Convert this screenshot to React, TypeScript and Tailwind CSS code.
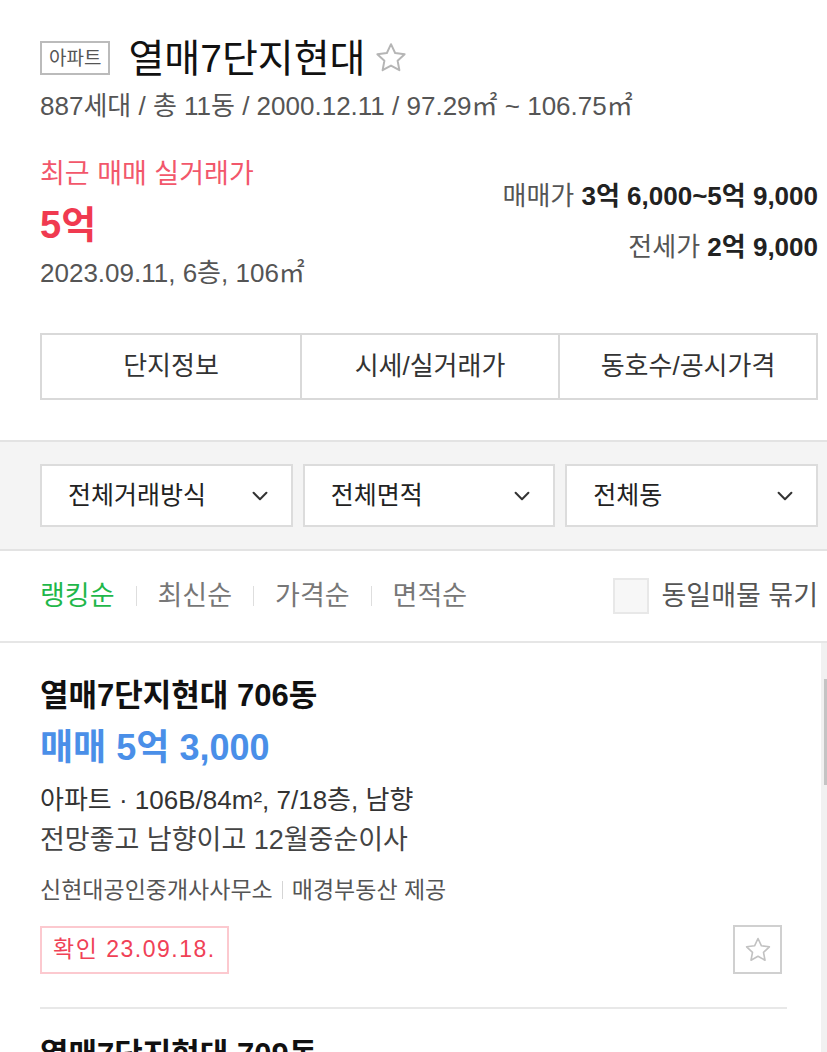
import React from "react";

const font = { fontFamily: '"Liberation Sans", "Noto Sans CJK KR", sans-serif' };

const StarIcon = ({ size = 32, color = "#b5b5b5" }: { size?: number; color?: string }) => (
  <svg width={size} height={size} viewBox="0 0 24 24" fill="none">
    <path
      d="M12 2.8l2.75 5.85 6.35.8-4.7 4.4 1.2 6.3L12 17.05 6.4 20.15l1.2-6.3-4.7-4.4 6.35-.8L12 2.8z"
      stroke={color}
      strokeWidth="1.3"
      strokeLinejoin="round"
    />
  </svg>
);

const Chevron = () => (
  <svg width="22" height="22" viewBox="0 0 24 24" fill="none">
    <path d="M5 8.5l7 7 7-7" stroke="#333" strokeWidth="2.2" strokeLinecap="round" strokeLinejoin="round" />
  </svg>
);

const tabs = ["단지정보", "시세/실거래가", "동호수/공시가격"];
const filters = ["전체거래방식", "전체면적", "전체동"];
const sorts = ["랭킹순", "최신순", "가격순", "면적순"];

export default function App() {
  return (
    <div className="w-[827px] h-[1052px] overflow-hidden bg-white text-[#222]" style={font}>
      {/* header */}
      <div className="pl-[40px] pr-[9px] pt-[34px]">
        <div className="flex items-center h-[48px]">
          <span className="border-2 border-[#bbb] px-[7px] h-[34px] flex items-center text-[19px] text-[#555] leading-none">
            아파트
          </span>
          <h1 className="ml-[18px] text-[39px] leading-none text-[#111]">열매7단지현대</h1>
          <span className="ml-[8px] flex items-center">
            <StarIcon size={36} />
          </span>
        </div>
        <p className="mt-[9px] text-[26px] leading-[30px] text-[#555]">
          887세대 / 총 11동 / 2000.12.11 / 97.29㎡ ~ 106.75㎡
        </p>

        <div className="mt-[38px] flex justify-between">
          <div>
            <p className="text-[27px] leading-[30px] text-[#f2576b]">최근 매매 실거래가</p>
            <p className="mt-[14px] text-[38px] leading-[44px] font-bold text-[#f03a50]">5억</p>
            <p className="mt-[11px] text-[26px] leading-[30px] text-[#555]">2023.09.11, 6층, 106㎡</p>
          </div>
          <div className="flex flex-col items-end pt-[22px]">
            <p className="text-[26px] leading-[30px] text-[#555]">
              매매가 <span className="font-bold text-[#222]">3억 6,000~5억 9,000</span>
            </p>
            <p className="mt-[21px] text-[26px] leading-[30px] text-[#555]">
              전세가 <span className="font-bold text-[#222]">2억 9,000</span>
            </p>
          </div>
        </div>

        <div className="mt-[45px] grid grid-cols-3 border-2 border-[#d9d9d9] h-[67px]">
          {tabs.map((t, i) => (
            <div
              key={t}
              className={`flex items-center justify-center text-[26px] text-[#333] ${i > 0 ? "border-l-2 border-[#d9d9d9]" : ""}`}
            >
              {t}
            </div>
          ))}
        </div>
      </div>

      {/* filters */}
      <div className="mt-[40px] h-[111px] bg-[#f4f4f4] border-y-2 border-[#e3e3e3] pl-[40px] pr-[9px] pt-[22px]">
        <div className="grid grid-cols-3 gap-[10px]">
          {filters.map((f) => (
            <div
              key={f}
              className="h-[63px] bg-white border-2 border-[#dcdcdc] flex items-center justify-between pl-[26px] pr-[20px] text-[25px] text-[#222]"
            >
              {f}
              <Chevron />
            </div>
          ))}
        </div>
      </div>

      {/* sort row */}
      <div className="h-[92px] flex items-center justify-between pl-[40px] pr-[9px] border-b-2 border-[#e6e6e6]">
        <div className="flex items-center text-[27px]">
          {sorts.map((s, i) => (
            <React.Fragment key={s}>
              {i > 0 && <span className="mx-[21px] w-px h-[20px] bg-[#dedede]" />}
              <span className={i === 0 ? "text-[#1fb74a]" : "text-[#777]"}>{s}</span>
            </React.Fragment>
          ))}
        </div>
        <div className="flex items-center">
          <span className="w-[36px] h-[36px] border-2 border-[#e8e8e8] bg-[#f7f7f7]" />
          <span className="ml-[12px] text-[27px] text-[#555] whitespace-nowrap">동일매물 묶기</span>
        </div>
      </div>

      {/* listing */}
      <div className="flex">
        <div className="flex-1 pl-[40px] pr-[34px] pt-[35px]">
          <p className="text-[31px] leading-[36px] font-bold text-[#111]">열매7단지현대 706동</p>
          <p className="mt-[13px] text-[36px] leading-[42px] font-bold text-[#4a8fe8]">매매 5억 3,000</p>
          <p className="mt-[15px] text-[26px] leading-[32px] text-[#333]">아파트 · 106B/84m², 7/18층, 남향</p>
          <p className="mt-[8px] text-[27px] leading-[32px] text-[#444]">전망좋고 남향이고 12월중순이사</p>
          <p className="mt-[20px] text-[23px] leading-[28px] text-[#555] flex items-center">
            신현대공인중개사사무소
            <span className="mx-[9px] w-px h-[18px] bg-[#d5d5d5]" />
            매경부동산 제공
          </p>
          <div className="mt-[21px] flex items-center justify-between">
            <span className="h-[48px] px-[11px] flex items-center border-2 border-[#fcc9cf] text-[23px] text-[#f04156] tracking-[1.5px]">
              확인 23.09.18.
            </span>
            <span className="mr-[5px] w-[49px] h-[49px] border-2 border-[#d0d0d0] flex items-center justify-center">
              <StarIcon size={30} color="#c2c2c2" />
            </span>
          </div>
          <div className="mt-[33px] h-[2px] bg-[#e8e8e8]" />
          <p className="mt-[28px] text-[31px] leading-[36px] font-bold text-[#111]">열매7단지현대 709동</p>
        </div>
        <div className="w-[6px] bg-[#f1f1f1] flex justify-end">
          <div className="mt-[36px] w-[3px] h-[106px] bg-[#c4c4c4]" />
        </div>
      </div>
    </div>
  );
}
